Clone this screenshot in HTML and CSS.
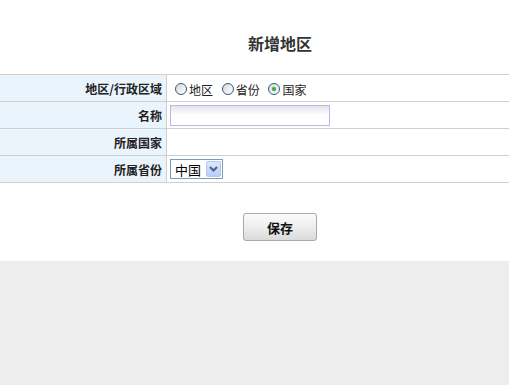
FILE: index.html
```html
<!DOCTYPE html>
<html lang="zh-CN">
<head>
  <meta charset="UTF-8" />
  <title>新增地区</title>
  <link rel="stylesheet" href="styles.css">
</head>
<body>
  <div class="page">
    <h2 class="title">新增地区</h2>
    <table class="form-table">
      <tr>
        <th>地区/行政区域</th>
        <td>
          <label class="radio"><input type="radio" name="level" value="area" /><span>地区</span></label>
          <label class="radio"><input type="radio" name="level" value="province" /><span>省份</span></label>
          <label class="radio"><input type="radio" name="level" value="country" checked /><span>国家</span></label>
        </td>
      </tr>
      <tr>
        <th>名称</th>
        <td><input type="text" class="text-input" /></td>
      </tr>
      <tr>
        <th>所属国家</th>
        <td></td>
      </tr>
      <tr>
        <th>所属省份</th>
        <td>
          <span class="select-wrap">
            <select class="select">
              <option>中国</option>
            </select>
            <span class="select-arrow">
              <svg width="9" height="6" viewBox="0 0 9 6"><path d="M1 1 L4.5 4.5 L8 1" fill="none" stroke="#4d6185" stroke-width="2"/></svg>
            </span>
          </span>
        </td>
      </tr>
    </table>
    <div class="actions">
      <button class="btn-save">保存</button>
    </div>
  </div>
</body>
</html>
```
FILE: styles.css
```css
body {
  margin: 0;
  background-color: #ededed;
  font-family: "Noto Sans CJK SC", "DejaVu Sans", sans-serif;
  font-size: 12px;
  color: #222;
}
.page {
  background-color: #fff;
  padding-bottom: 20px;
}
.title {
  margin: 0;
  padding: 31px 0 0 51px;
  height: 74px;
  box-sizing: border-box;
  text-align: center;
  font-size: 16px;
  line-height: 24px;
  font-weight: bold;
  color: #333;
}
.form-table {
  width: 100%;
  border-collapse: collapse;
  border-top: 1px solid #cfcfcf;
}
.form-table tr {
  height: 27px;
}
.form-table th,
.form-table td {
  border-bottom: 1px solid #cfcfcf;
  padding: 0;
  height: 26px;
}
.form-table th {
  width: 162px;
  padding-right: 4px;
  background-color: #eaf4fd;
  border-right: 1px solid #cfcfcf;
  text-align: right;
  font-weight: bold;
  color: #222;
}
.form-table td {
  padding-left: 3px;
}
.radio {
  display: inline-flex;
  align-items: center;
  margin-right: 1px;
  vertical-align: middle;
}
.radio input {
  appearance: none;
  width: 12px;
  height: 12px;
  margin: 0 2px 0 5px;
  border: 1px solid #2b5e8c;
  border-radius: 50%;
  background: linear-gradient(135deg, #d8d8d8, #fff);
  display: grid;
  place-items: center;
}
.radio input:checked::after {
  content: "";
  width: 4px;
  height: 4px;
  border-radius: 50%;
  background-color: #35b035;
  box-shadow: 0 0 1px #7bd27b;
}
.text-input {
  width: 160px;
  height: 21px;
  box-sizing: border-box;
  border: 1px solid #b8b8f0;
  background: linear-gradient(#e4e4ea, #fff 9px);
  margin: 0;
  vertical-align: middle;
}
.select-wrap {
  position: relative;
  display: inline-block;
  vertical-align: middle;
}
.select {
  appearance: none;
  width: 53px;
  height: 20px;
  box-sizing: border-box;
  border: 1px solid #7f9db9;
  border-radius: 0;
  background: #fff;
  padding: 0 0 0 4px;
  font-family: "Noto Sans CJK SC", sans-serif;
  font-size: 13px;
  color: #000;
  display: block;
}
.select-arrow {
  position: absolute;
  top: 2px;
  right: 2px;
  width: 15px;
  height: 16px;
  box-sizing: border-box;
  border: 1px solid #b5c8f0;
  border-radius: 2px;
  background: linear-gradient(#dde8fe, #b8cdf8);
  display: flex;
  align-items: center;
  justify-content: center;
  pointer-events: none;
}
.actions {
  text-align: center;
  padding: 30px 0 0 51px;
}
.btn-save {
  width: 74px;
  height: 28px;
  border: 1px solid #a9a9a9;
  border-radius: 3px;
  background: linear-gradient(#fbfbfb, #eeeeee 50%, #dadada);
  font-family: "Noto Sans CJK SC", sans-serif;
  font-size: 13px;
  font-weight: bold;
  color: #111;
  cursor: pointer;
}
```
